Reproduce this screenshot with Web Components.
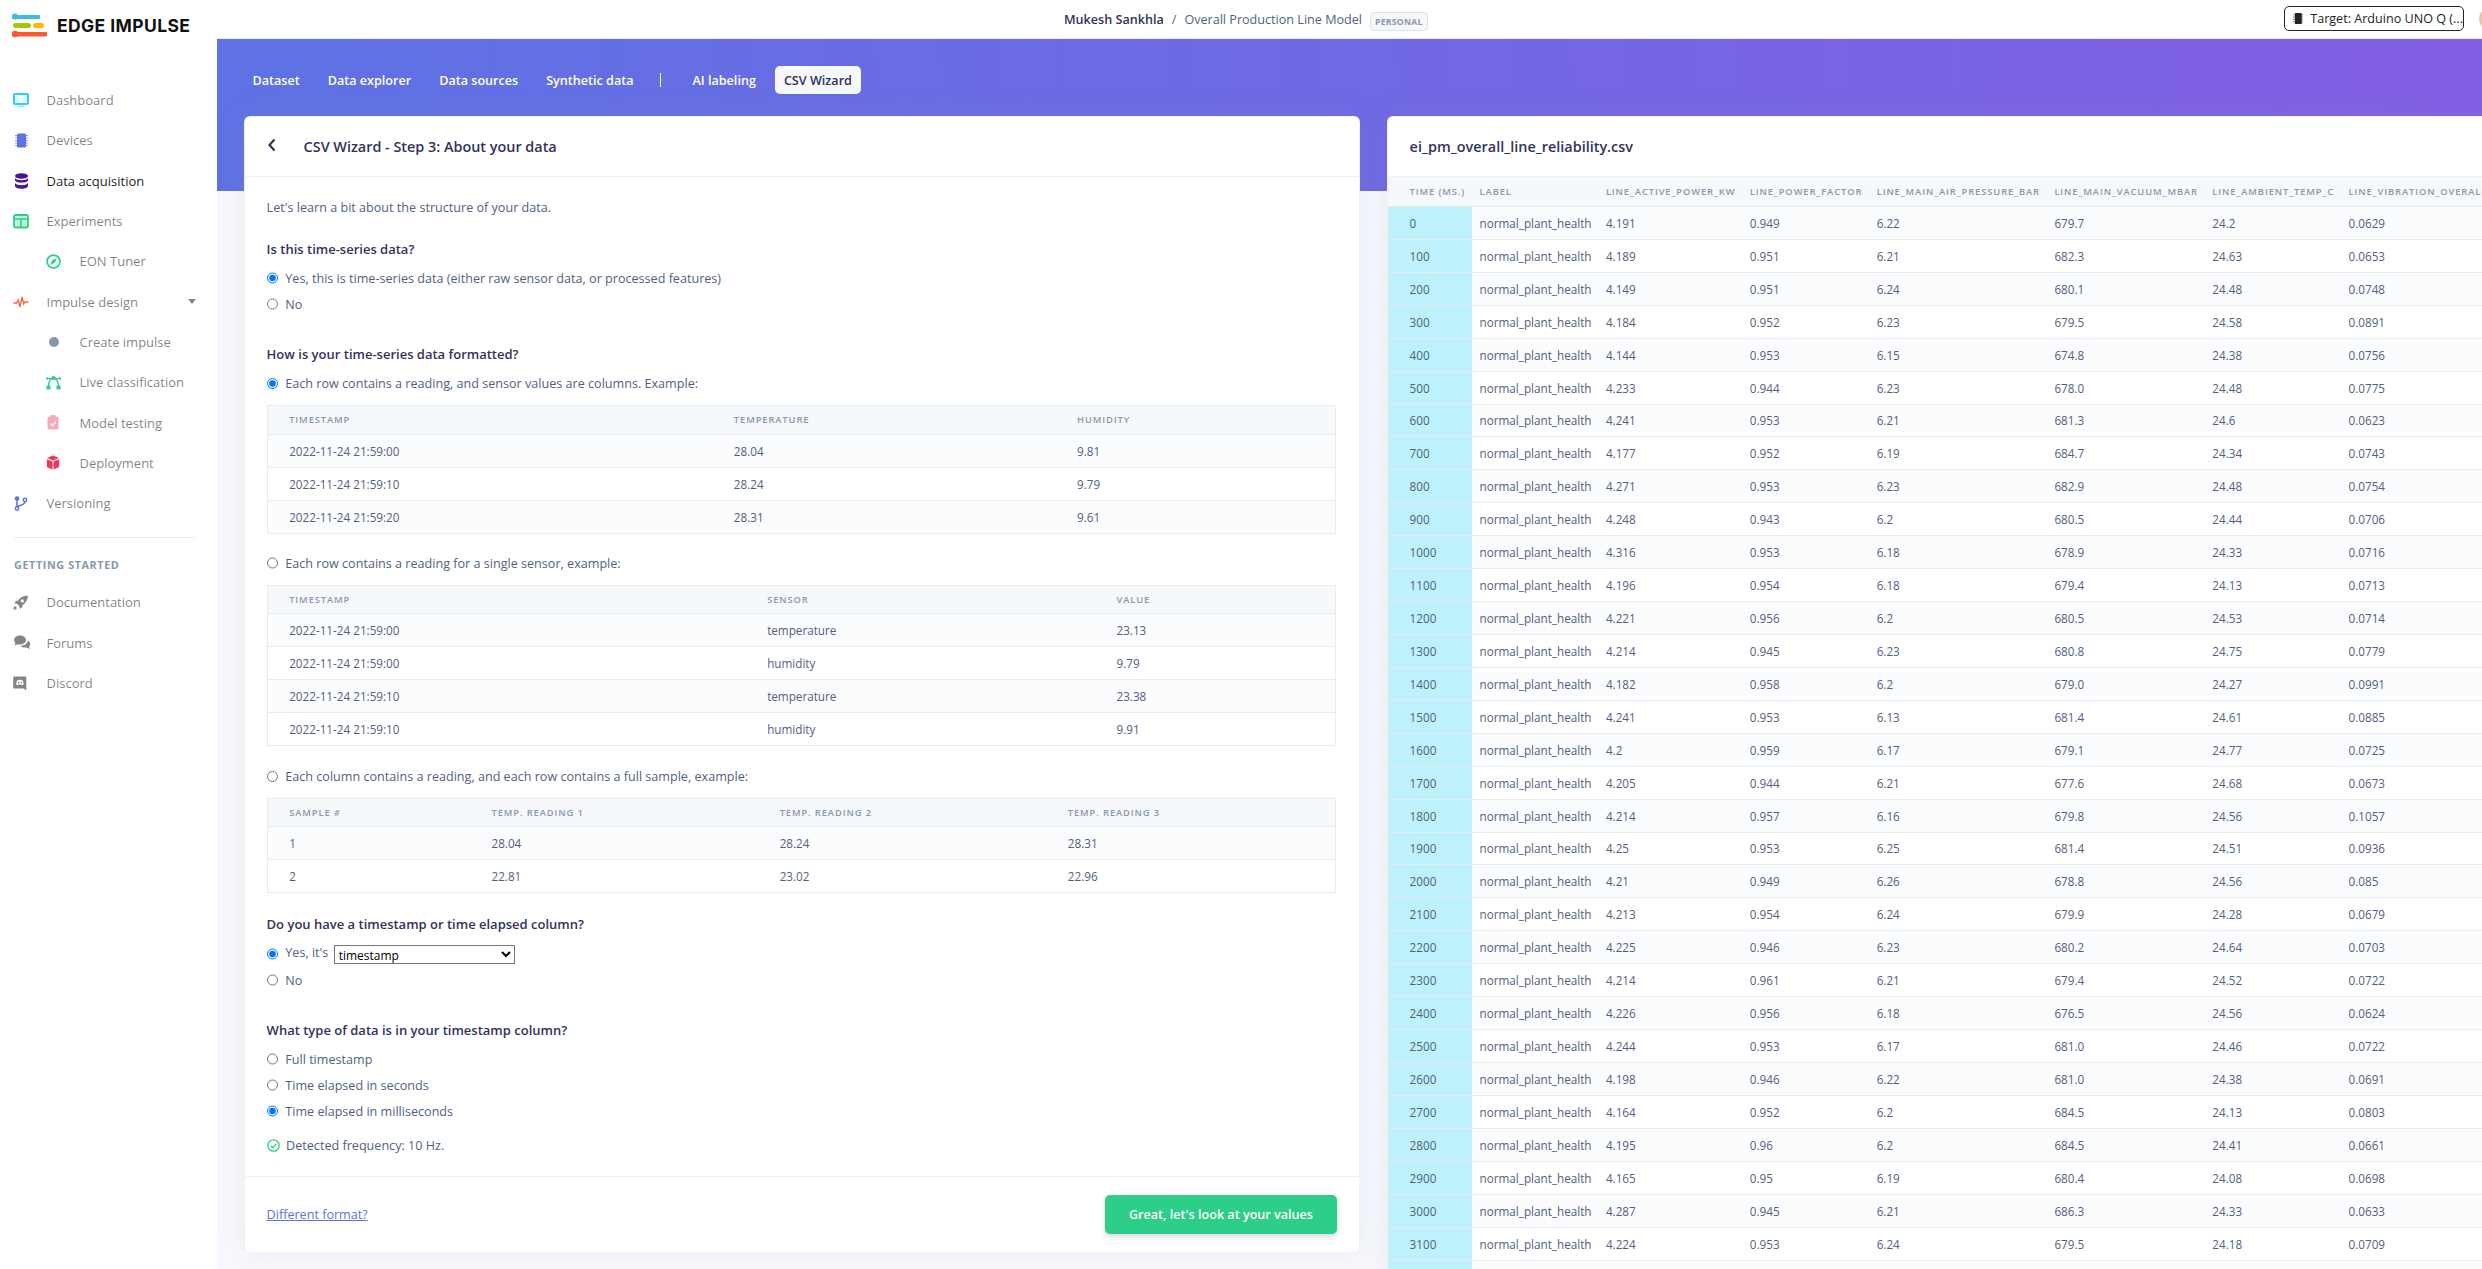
<!DOCTYPE html>
<html>
<head>
<meta charset="utf-8">
<title>CSV Wizard</title>
<style>
html, body { margin: 0; padding: 0; height: 100%; overflow: hidden; background: #f8f9fe; }
body { font-family: "Open Sans", sans-serif; font-size: 12.6px; color: #525f7f; }
</style>
</head>
<body>
<ei-app>
  <ei-sidebar slot="sidebar">
    <ei-nav-item>
      <svg slot="icon" width="16" height="15" viewBox="0 0 16 15"><rect x="1" y="1" width="14" height="10" rx="1" fill="#e8fbfe" stroke="#2fd0ef" stroke-width="2"/><rect x="4.5" y="12.5" width="7" height="1.6" fill="#8fe6f6"/></svg>
      Dashboard
    </ei-nav-item>
    <ei-nav-item>
      <svg slot="icon" width="16" height="15" viewBox="0 0 16 15"><rect x="4" y="0.5" width="9" height="14" rx="1.5" fill="#5e72e4"/><path d="M2 2.5h2M2 5h2M2 7.5h2M2 10h2M2 12.5h2M13 2.5h2M13 5h2M13 7.5h2M13 10h2M13 12.5h2" stroke="#8d9cec" stroke-width="1"/></svg>
      Devices
    </ei-nav-item>
    <ei-nav-item active>
      <svg slot="icon" width="16" height="16" viewBox="0 0 16 16"><g fill="#4b0f9e"><ellipse cx="8.5" cy="3" rx="6.5" ry="2.8"/><path d="M2 5c1 1.500 3.500 2.200 6.500 2.200S14 6.500 15 5v2.400c-1 1.500-3.500 2.200-6.500 2.200S3 8.900 2 7.400z"/><path d="M2 10c1 1.500 3.500 2.200 6.500 2.200S14 11.500 15 10v3c0 1.600-3 2.800-6.500 2.800S2 14.600 2 13z"/></g></svg>
      Data acquisition
    </ei-nav-item>
    <ei-nav-item>
      <svg slot="icon" width="16" height="15" viewBox="0 0 16 15"><rect x="1" y="1" width="14" height="12.500" rx="1.500" fill="#c3f1dc" stroke="#2dce89" stroke-width="1.800"/><path d="M1 5h14M8 5v8" stroke="#2dce89" stroke-width="1.600"/></svg>
      Experiments
    </ei-nav-item>
    <ei-nav-item sub>
      <svg slot="icon" width="15" height="15" viewBox="0 0 15 15"><circle cx="7.500" cy="7.500" r="6.400" fill="none" stroke="#2dce89" stroke-width="1.800"/><path d="M11 4L8.800 8.800 4 11l2.200-4.800z" fill="#2dce89"/></svg>
      EON Tuner
    </ei-nav-item>
    <ei-nav-item caret>
      <svg slot="icon" width="16" height="12" viewBox="0 0 16 12"><path d="M0.500 7h3.200l1.500-3 1.800 7 2-10 1.700 7 1.200-2h3.600" fill="none" stroke="#fb6340" stroke-width="1.300"/></svg>
      Impulse design
    </ei-nav-item>
    <ei-nav-item sub>
      <svg slot="icon" width="15" height="12" viewBox="0 0 15 12"><circle cx="8" cy="6" r="5" fill="#8798ad"/></svg>
      Create impulse
    </ei-nav-item>
    <ei-nav-item sub>
      <svg slot="icon" width="15" height="15" viewBox="0 0 15 15"><path d="M2.500 11.500C2.500 6 5 3 7.500 3s5 3 5 8.500" fill="none" stroke="#2dce89" stroke-width="1.300"/><path d="M1 3.500h13" stroke="#2dce89" stroke-width="1"/><g fill="#2dce89"><rect x="0.500" y="10.500" width="4" height="4" rx=".6"/><rect x="10.500" y="10.500" width="4" height="4" rx=".6"/><rect x="5.700" y="1.200" width="3.600" height="3.600" rx=".6"/><circle cx="1.200" cy="3.500" r="1.200"/><circle cx="13.800" cy="3.500" r="1.200"/></g></svg>
      Live classification
    </ei-nav-item>
    <ei-nav-item sub>
      <svg slot="icon" width="15" height="15" viewBox="0 0 15 15"><rect x="1.500" y="1.500" width="11" height="13" rx="1.500" fill="#f7a9b9"/><rect x="4.500" y="0" width="5" height="3" rx="1" fill="#f7a9b9"/><path d="M4.500 8.500l2 2 3.500-3.800" fill="none" stroke="#fff" stroke-width="1.300"/></svg>
      Model testing
    </ei-nav-item>
    <ei-nav-item sub>
      <svg slot="icon" width="15" height="15" viewBox="0 0 15 15"><path d="M7 0.500l6 2.500-6 2.400L1 3z" fill="#f5365c"/><path d="M0.800 4.300l5.700 2.300v7.900L1.900 12.600c-.7-.3-1.100-.8-1.100-1.500zM13.200 4.300L7.500 6.600v7.900l4.600-1.900c.7-.3 1.100-.8 1.100-1.500z" fill="#f5365c"/></svg>
      Deployment
    </ei-nav-item>
    <ei-nav-item>
      <svg slot="icon" width="15" height="15" viewBox="0 0 15 15"><g fill="none" stroke="#5e72e4" stroke-width="1.500"><circle cx="4" cy="2.500" r="1.600" fill="#5e72e4"/><circle cx="4" cy="12.500" r="1.700"/><circle cx="12" cy="4" r="1.700"/><path d="M4 4v7M12 5.800c0 3-4 3.200-8 5"/></g></svg>
      Versioning
    </ei-nav-item>
    <hr>
    <ei-nav-heading>Getting started</ei-nav-heading>
    <ei-nav-item>
      <svg slot="icon" width="16" height="15" viewBox="0 0 16 15"><path d="M15 0.500c-4.500.2-7.500 1.700-9.800 5L3 6l-1.600 2.500L4 8.800l2.400 2.400.3 2.600 2.500-1.600.5-2.200c3.300-2.300 5.200-5.300 5.300-10.500z" fill="#858585"/><circle cx="9.300" cy="5.900" r="1.600" fill="#fff"/><path d="M1 11.500l2.400 0 .2 2.400-3 .8z" fill="#858585"/></svg>
      Documentation
    </ei-nav-item>
    <ei-nav-item>
      <svg slot="icon" width="18" height="15" viewBox="0 0 18 15"><ellipse cx="7" cy="5" rx="6" ry="4.600" fill="#858585"/><path d="M2.500 7.500L1.500 10.500 5.500 9z" fill="#858585"/><path d="M14.500 5.500c1.700.8 2.700 2.100 2.700 3.500 0 1-.5 1.900-1.200 2.500l1 2.500-3.500-1.500c-2.300.4-4.700-.2-6-1.800 3.800.2 7.300-1.900 7-5.200z" fill="#858585"/></svg>
      Forums
    </ei-nav-item>
    <ei-nav-item>
      <svg slot="icon" width="15" height="15" viewBox="0 0 15 15"><path d="M1.500 0.500h10.500c.8 0 1.300.5 1.300 1.300v12.700l-2.500-2H1.500c-.8 0-1.300-.5-1.300-1.300V1.800C.2 1 .7.500 1.500.500z" fill="#858585"/><path d="M4 4.500c2-1 4-1 5.800 0l1 3.800c-.7.700-1.400.9-2 1L8.300 8.500H5.500L5 9.300c-.7-.1-1.300-.3-2-1z" fill="#fff"/><circle cx="5.600" cy="6.600" r=".8" fill="#858585"/><circle cx="8.200" cy="6.600" r=".8" fill="#858585"/></svg>
      Discord
    </ei-nav-item>
  </ei-sidebar>

  <ei-topbar slot="topbar"></ei-topbar>

  <ei-tabs slot="tabs">
    <ei-tab>Dataset</ei-tab>
    <ei-tab>Data explorer</ei-tab>
    <ei-tab>Data sources</ei-tab>
    <ei-tab sep>Synthetic data</ei-tab>
    <ei-tab>AI labeling</ei-tab>
    <ei-tab active>CSV Wizard</ei-tab>
  </ei-tabs>

  <ei-card slot="left" back title="CSV Wizard - Step 3: About your data">
    <ei-para>Let's learn a bit about the structure of your data.</ei-para>

    <ei-question style="margin-top:22.500px">Is this time-series data?</ei-question>
    <ei-radio checked style="margin-top:6px">Yes, this is time-series data (either raw sensor data, or processed features)</ei-radio>
    <ei-radio>No</ei-radio>

    <ei-question style="margin-top:27px">How is your time-series data formatted?</ei-question>
    <ei-radio checked style="margin-top:6.500px">Each row contains a reading, and sensor values are columns. Example:</ei-radio>
    <ei-example-table style="margin-top:8.500px" columns="Timestamp,Temperature,Humidity"
      rows="2022-11-24 21:59:00,28.04,9.81;2022-11-24 21:59:10,28.24,9.79;2022-11-24 21:59:20,28.31,9.61"></ei-example-table>
    <ei-radio style="margin-top:16.500px">Each row contains a reading for a single sensor, example:</ei-radio>
    <ei-example-table style="margin-top:8.500px" columns="Timestamp,Sensor,Value"
      rows="2022-11-24 21:59:00,temperature,23.13;2022-11-24 21:59:00,humidity,9.79;2022-11-24 21:59:10,temperature,23.38;2022-11-24 21:59:10,humidity,9.91"></ei-example-table>
    <ei-radio style="margin-top:17.500px">Each column contains a reading, and each row contains a full sample, example:</ei-radio>
    <ei-example-table style="margin-top:8px" columns="Sample #,Temp. reading 1,Temp. reading 2,Temp. reading 3"
      rows="1,28.04,28.24,28.31;2,22.81,23.02,22.96"></ei-example-table>

    <ei-question style="margin-top:21px">Do you have a timestamp or time elapsed column?</ei-question>
    <ei-radio checked style="margin-top:7px">Yes, it's <ei-select value="timestamp"></ei-select></ei-radio>
    <ei-radio>No</ei-radio>

    <ei-question style="margin-top:27px">What type of data is in your timestamp column?</ei-question>
    <ei-radio style="margin-top:6px">Full timestamp</ei-radio>
    <ei-radio>Time elapsed in seconds</ei-radio>
    <ei-radio checked>Time elapsed in milliseconds</ei-radio>
    <ei-detected style="margin-top:11px">Detected frequency: 10 Hz.</ei-detected>

    <ei-link slot="footer">Different format?</ei-link>
    <ei-button slot="footer">Great, let's look at your values</ei-button>
  </ei-card>

  <ei-card slot="right" title="ei_pm_overall_line_reliability.csv" flush>
    <ei-data-table></ei-data-table>
  </ei-card>
</ei-app>

<script>
const appTemplate = document.createElement('template')
appTemplate.innerHTML = `
<style>
:host { display: flex; width: 100vw; height: 100vh; overflow: hidden; background: #f8f9fe; }
.side { flex: none; width: 217px; background: #fff; }
.main { flex: none; width: 2265px; min-width: 0; }
.hero { height: 152px; box-sizing: border-box; padding: 27px 0 0 27px; background: linear-gradient(87deg, #5e72e4 0, #825ee4 100%); }
.cards { display: flex; gap: 27px; margin-top: -75px; padding-left: 27px; }
.left { flex: none; width: 1116px; }
.right { flex: none; width: 1300px; }
</style>
<div class="side"><slot name="sidebar"></slot></div>
<div class="main">
  <slot name="topbar"></slot>
  <div class="hero"><slot name="tabs"></slot></div>
  <div class="cards">
    <div class="left"><slot name="left"></slot></div>
    <div class="right"><slot name="right"></slot></div>
  </div>
</div>
`
customElements.define('ei-app', class extends HTMLElement {
  constructor () {
    super()
    this.attachShadow({ mode: 'open' }).appendChild(appTemplate.content.cloneNode(true))
  }
})

const sidebarTemplate = document.createElement('template')
sidebarTemplate.innerHTML = `
<style>
:host { display: block; width: 217px; }
.brand { display: flex; align-items: center; gap: 10px; height: 48px; padding: 0 0 0 12px; margin-top: 1px; margin-bottom: 31px; }
.name { font-family: Inter, "Open Sans", sans-serif; font-weight: 700; font-size: 17.500px; color: #111; letter-spacing: .4px; white-space: nowrap; }
::slotted(hr) { height: 1px; border: 0; background: #e9ecef; margin: 14px 22px 17px 14px; }
</style>
<div class="brand">
  <svg width="35" height="25" viewBox="0 0 35 25">
    <rect x="0" y="2" width="28" height="4" rx="1" fill="#3fbdd2"/><circle cx="3" cy="3.500" r="3" fill="#3fbdd2"/>
    <rect x="1" y="10" width="18" height="5" rx="2.500" fill="#a4c700"/>
    <rect x="21" y="10" width="11" height="5" rx="2.500" fill="#ffb900"/>
    <rect x="0" y="19" width="35" height="4.500" rx="1" fill="#fb5a2d"/><circle cx="3" cy="21" r="3.200" fill="#fb5a2d"/>
  </svg>
  <span class="name">EDGE IMPULSE</span>
</div>
<slot></slot>
`
customElements.define('ei-sidebar', class extends HTMLElement {
  constructor () {
    super()
    this.attachShadow({ mode: 'open' }).appendChild(sidebarTemplate.content.cloneNode(true))
  }
})

const navItemTemplate = document.createElement('template')
navItemTemplate.innerHTML = `
<style>
:host { display: flex; align-items: center; height: 40.300px; padding-left: 13px; color: rgba(0,0,0,.5); font-size: 13px; white-space: nowrap; position: relative; }
:host([sub]) { padding-left: 46px; }
:host([active]) { color: rgba(0,0,0,.9); }
.icon { flex: none; width: 33.500px; display: flex; align-items: center; }
.caret { display: none; position: absolute; left: 188px; top: 18px; width: 0; height: 0; border: 4px solid transparent; border-top: 5px solid #858585; border-bottom: 0; }
:host([caret]) .caret { display: block; }
</style>
<span class="icon"><slot name="icon"></slot></span>
<slot></slot>
<span class="caret"></span>
`
customElements.define('ei-nav-item', class extends HTMLElement {
  constructor () {
    super()
    this.attachShadow({ mode: 'open' }).appendChild(navItemTemplate.content.cloneNode(true))
  }
})

const navHeadingTemplate = document.createElement('template')
navHeadingTemplate.innerHTML = `
<style>
:host { display: block; padding-left: 14px; height: 27px; line-height: 19px; font-size: 10.800px; font-weight: 700; letter-spacing: .6px; color: #8898aa; text-transform: uppercase; }
</style>
<slot></slot>
`
customElements.define('ei-nav-heading', class extends HTMLElement {
  constructor () {
    super()
    this.attachShadow({ mode: 'open' }).appendChild(navHeadingTemplate.content.cloneNode(true))
  }
})

const topbarTemplate = document.createElement('template')
topbarTemplate.innerHTML = `
<style>
:host { display: flex; align-items: center; height: 38px; box-sizing: content-box; border-bottom: 1px solid #e9ecef; background: #fff; padding-left: 847px; overflow: hidden; font-size: 12.600px; white-space: nowrap; }
.crumb { display: flex; align-items: center; height: 26px; color: #525f7f; }
b { font-weight: 600; color: #32325d; }
i { font-style: normal; margin: 0 8px; }
.badge { margin-left: 8px; height: 19px; box-sizing: border-box; padding: 0 4px; line-height: 18px; margin-top: 4px; border: 1px solid #dee2e6; border-radius: 4px; background: #f6f9fc; color: #8898aa; font-size: 8.600px; font-weight: 700; letter-spacing: .3px; }
.target { margin-left: auto; display: flex; align-items: center; gap: 7px; width: 180px; height: 25px; box-sizing: border-box; padding-left: 8px; margin-top: -1px; border: 1px solid #212529; border-radius: 5px; color: #212529; font-size: 12.600px; }
.avatar { flex: none; width: 24px; height: 24px; border-radius: 50%; margin-left: 15px; margin-right: -21px; background: #e3c7a8; }
</style>
<span class="crumb"><b>Mukesh Sankhla</b><i>/</i><span>Overall Production Line Model</span><span class="badge">PERSONAL</span></span>
<span class="target">
  <svg width="11" height="13" viewBox="0 0 11 13"><rect x="2" y="0.500" width="7.500" height="12" rx="1" fill="#212529"/><path d="M0 2.500h2M0 5h2M0 7.500h2M0 10h2M9.500 2.500h1.500M9.500 5h1.500M9.500 7.500h1.500M9.500 10h1.500" stroke="#777" stroke-width="1"/></svg>
  Target: Arduino UNO Q (...
</span>
<span class="avatar"></span>
`
customElements.define('ei-topbar', class extends HTMLElement {
  constructor () {
    super()
    this.attachShadow({ mode: 'open' }).appendChild(topbarTemplate.content.cloneNode(true))
  }
})

const tabsTemplate = document.createElement('template')
tabsTemplate.innerHTML = `
<style>
:host { display: flex; align-items: center; height: 28px; gap: 10px; margin-left: -0.500px; }
</style>
<slot></slot>
`
customElements.define('ei-tabs', class extends HTMLElement {
  constructor () {
    super()
    this.attachShadow({ mode: 'open' }).appendChild(tabsTemplate.content.cloneNode(true))
  }
})

const tabTemplate = document.createElement('template')
tabTemplate.innerHTML = `
<style>
:host { display: flex; align-items: center; height: 28px; padding: 0 9px; border-radius: 5px; color: #fff; font-size: 12.600px; font-weight: 600; white-space: nowrap; }
:host([active]) { background: #f6f9fc; color: #32325d; }
:host([sep]) { margin-right: 0; }
.sep { display: none; width: 1px; height: 14px; background: #fff; margin-left: 26px; margin-right: 13px; }
:host([sep]) .sep { display: block; }
:host([sep]) { padding-right: 0; }
</style>
<slot></slot><span class="sep"></span>
`
customElements.define('ei-tab', class extends HTMLElement {
  constructor () {
    super()
    this.attachShadow({ mode: 'open' }).appendChild(tabTemplate.content.cloneNode(true))
  }
})

const cardTemplate = document.createElement('template')
cardTemplate.innerHTML = `
<style>
:host { display: block; background: #fff; border-radius: 6px; box-shadow: 0 0 28px 0 rgba(136,152,170,.15); border: 1px solid rgba(0,0,0,.05); box-sizing: border-box; }
.head { display: flex; align-items: center; height: 59px; padding-left: 21.600px; border-bottom: 1.500px solid #eef0f3; color: #32325d; font-size: 14.400px; font-weight: 600; white-space: nowrap; }
.back { display: none; width: 37px; flex: none; }
:host([back]) .back { display: block; }
.body { padding: 20.500px 23px 21px 21.600px; }
:host([flush]) .body { padding: 0; }
.foot { display: flex; align-items: center; justify-content: space-between; height: 75px; padding: 0 22px 0 21.600px; border-top: 1px solid #eef0f3; }
:host([flush]) .foot { display: none; }
</style>
<div class="head">
  <span class="back"><svg width="10" height="14" viewBox="0 0 10 14"><path d="M7.500 1.500L2.500 7l5 5.500" fill="none" stroke="#32325d" stroke-width="2.200"/></svg></span>
  <span class="title"></span>
</div>
<div class="body"><slot></slot></div>
<div class="foot"><slot name="footer"></slot></div>
`
customElements.define('ei-card', class extends HTMLElement {
  constructor () {
    super()
    this.attachShadow({ mode: 'open' }).appendChild(cardTemplate.content.cloneNode(true))
  }

  connectedCallback () {
    this.shadowRoot.querySelector('.title').textContent = this.getAttribute('title')
    this.removeAttribute('title')
  }
})

const paraTemplate = document.createElement('template')
paraTemplate.innerHTML = `
<style>
:host { display: block; line-height: 19px; font-size: 12.600px; color: #525f7f; }
</style>
<slot></slot>
`
customElements.define('ei-para', class extends HTMLElement {
  constructor () {
    super()
    this.attachShadow({ mode: 'open' }).appendChild(paraTemplate.content.cloneNode(true))
  }
})

const questionTemplate = document.createElement('template')
questionTemplate.innerHTML = `
<style>
:host { display: block; line-height: 20px; font-size: 13px; font-weight: 600; color: #32325d; }
</style>
<slot></slot>
`
customElements.define('ei-question', class extends HTMLElement {
  constructor () {
    super()
    this.attachShadow({ mode: 'open' }).appendChild(questionTemplate.content.cloneNode(true))
  }
})

const radioTemplate = document.createElement('template')
radioTemplate.innerHTML = `
<style>
:host { display: flex; align-items: center; height: 26px; font-size: 12.600px; color: #525f7f; white-space: nowrap; }
input { flex: none; width: 11.700px; height: 11.700px; margin: 0 7px 0 0; }
</style>
<input type="radio"><span><slot></slot></span>
`
customElements.define('ei-radio', class extends HTMLElement {
  constructor () {
    super()
    this.attachShadow({ mode: 'open' }).appendChild(radioTemplate.content.cloneNode(true))
    this.shadowRoot.querySelector('input').checked = this.hasAttribute('checked')
  }
})

const selectTemplate = document.createElement('template')
selectTemplate.innerHTML = `
<style>
:host { display: inline-block; margin-left: 2px; vertical-align: middle; }
select { display: block; width: 181px; height: 19px; padding: 0; font-family: "Open Sans", sans-serif; font-size: 12px; color: #000; background: #fff; }
</style>
<select></select>
`
customElements.define('ei-select', class extends HTMLElement {
  constructor () {
    super()
    this.attachShadow({ mode: 'open' }).appendChild(selectTemplate.content.cloneNode(true))
    const option = document.createElement('option')
    option.textContent = this.getAttribute('value')
    this.shadowRoot.querySelector('select').appendChild(option)
  }
})

// rows come in as "a,b,c;d,e,f"
const exampleTemplate = document.createElement('template')
exampleTemplate.innerHTML = `
<style>
:host { display: block; }
table { width: 100%; border-collapse: collapse; border: 1px solid #e9ecef; white-space: nowrap; }
th { height: 28.500px; box-sizing: border-box; padding: 0 21.600px; text-align: left; font-size: 9.360px; font-weight: 600; letter-spacing: .9px; text-transform: uppercase; color: #8898aa; background: #f6f9fc; border-bottom: 1px solid #e9ecef; }
td { height: 33px; box-sizing: border-box; padding: 0 21.600px; font-size: 11.700px; color: #525f7f; border-top: 1px solid #e9ecef; }
tr:nth-child(odd) td { background: #fbfcfe; }
</style>
<table><thead><tr></tr></thead><tbody></tbody></table>
`
customElements.define('ei-example-table', class extends HTMLElement {
  constructor () {
    super()
    this.attachShadow({ mode: 'open' }).appendChild(exampleTemplate.content.cloneNode(true))
  }

  connectedCallback () {
    const head = this.shadowRoot.querySelector('thead tr')
    const body = this.shadowRoot.querySelector('tbody')
    this.getAttribute('columns').split(',').forEach(name => {
      const th = document.createElement('th')
      th.textContent = name
      head.appendChild(th)
    })
    this.getAttribute('rows').split(';').forEach(row => {
      const tr = document.createElement('tr')
      row.split(',').forEach(value => {
        const td = document.createElement('td')
        td.textContent = value
        tr.appendChild(td)
      })
      body.appendChild(tr)
    })
  }
})

const detectedTemplate = document.createElement('template')
detectedTemplate.innerHTML = `
<style>
:host { display: flex; align-items: center; gap: 6.500px; height: 20px; font-size: 12.600px; color: #525f7f; }
</style>
<svg width="13" height="13" viewBox="0 0 13 13"><circle cx="6.500" cy="6.500" r="5.700" fill="none" stroke="#2dce89" stroke-width="1.300"/><path d="M3.800 6.700l2 2 3.600-3.800" fill="none" stroke="#2dce89" stroke-width="1.300"/></svg>
<slot></slot>
`
customElements.define('ei-detected', class extends HTMLElement {
  constructor () {
    super()
    this.attachShadow({ mode: 'open' }).appendChild(detectedTemplate.content.cloneNode(true))
  }
})

const linkTemplate = document.createElement('template')
linkTemplate.innerHTML = `
<style>
:host { display: inline-block; font-size: 12.600px; color: #5e72e4; text-decoration: underline; margin-top: 0; }
</style>
<slot></slot>
`
customElements.define('ei-link', class extends HTMLElement {
  constructor () {
    super()
    this.attachShadow({ mode: 'open' }).appendChild(linkTemplate.content.cloneNode(true))
  }
})

const buttonTemplate = document.createElement('template')
buttonTemplate.innerHTML = `
<style>
:host { display: flex; align-items: center; justify-content: center; width: 232px; height: 39px; border-radius: 5px; background: #2dce89; color: #fff; font-size: 12.600px; font-weight: 600; box-shadow: 0 4px 6px rgba(50,50,93,.11), 0 1px 3px rgba(0,0,0,.08); white-space: nowrap; }
</style>
<slot></slot>
`
customElements.define('ei-button', class extends HTMLElement {
  constructor () {
    super()
    this.attachShadow({ mode: 'open' }).appendChild(buttonTemplate.content.cloneNode(true))
  }
})

const csvRows = `0 4.191 0.949 6.22 679.7 24.2 0.0629
100 4.189 0.951 6.21 682.3 24.63 0.0653
200 4.149 0.951 6.24 680.1 24.48 0.0748
300 4.184 0.952 6.23 679.5 24.58 0.0891
400 4.144 0.953 6.15 674.8 24.38 0.0756
500 4.233 0.944 6.23 678.0 24.48 0.0775
600 4.241 0.953 6.21 681.3 24.6 0.0623
700 4.177 0.952 6.19 684.7 24.34 0.0743
800 4.271 0.953 6.23 682.9 24.48 0.0754
900 4.248 0.943 6.2 680.5 24.44 0.0706
1000 4.316 0.953 6.18 678.9 24.33 0.0716
1100 4.196 0.954 6.18 679.4 24.13 0.0713
1200 4.221 0.956 6.2 680.5 24.53 0.0714
1300 4.214 0.945 6.23 680.8 24.75 0.0779
1400 4.182 0.958 6.2 679.0 24.27 0.0991
1500 4.241 0.953 6.13 681.4 24.61 0.0885
1600 4.2 0.959 6.17 679.1 24.77 0.0725
1700 4.205 0.944 6.21 677.6 24.68 0.0673
1800 4.214 0.957 6.16 679.8 24.56 0.1057
1900 4.25 0.953 6.25 681.4 24.51 0.0936
2000 4.21 0.949 6.26 678.8 24.56 0.085
2100 4.213 0.954 6.24 679.9 24.28 0.0679
2200 4.225 0.946 6.23 680.2 24.64 0.0703
2300 4.214 0.961 6.21 679.4 24.52 0.0722
2400 4.226 0.956 6.18 676.5 24.56 0.0624
2500 4.244 0.953 6.17 681.0 24.46 0.0722
2600 4.198 0.946 6.22 681.0 24.38 0.0691
2700 4.164 0.952 6.2 684.5 24.13 0.0803
2800 4.195 0.96 6.2 684.5 24.41 0.0661
2900 4.165 0.95 6.19 680.4 24.08 0.0698
3000 4.287 0.945 6.21 686.3 24.33 0.0633
3100 4.224 0.953 6.24 679.5 24.18 0.0709`

const dataTemplate = document.createElement('template')
dataTemplate.innerHTML = `
<style>
:host { display: block; overflow: hidden; }
table { border-collapse: collapse; white-space: nowrap; }
th { height: 29.500px; box-sizing: border-box; padding: 0 7.200px; text-align: left; font-size: 9.360px; font-weight: 600; letter-spacing: .9px; text-transform: uppercase; color: #8898aa; background: #f6f9fc; border-bottom: 1px solid #e9ecef; }
td { height: 32.930px; box-sizing: border-box; padding: 0 7.200px; font-size: 11.700px; color: #525f7f; border-top: 1px solid #e9ecef; }
th:first-child, td:first-child { padding-left: 21.600px; }
td:first-child { background: #bdf1fb; }
tr:nth-child(odd) td:not(:first-child) { background: #fbfcfe; }
</style>
<table><thead><tr></tr></thead><tbody></tbody></table>
`
customElements.define('ei-data-table', class extends HTMLElement {
  constructor () {
    super()
    this.attachShadow({ mode: 'open' }).appendChild(dataTemplate.content.cloneNode(true))
  }

  connectedCallback () {
    const head = this.shadowRoot.querySelector('thead tr')
    const body = this.shadowRoot.querySelector('tbody')
    const columns = ['Time (ms.)', 'Label', 'line_active_power_kw', 'line_power_factor', 'line_main_air_pressure_bar',
      'line_main_vacuum_mbar', 'line_ambient_temp_c', 'line_vibration_overall']
    columns.forEach(name => {
      const th = document.createElement('th')
      th.textContent = name
      head.appendChild(th)
    })
    csvRows.split('\n').forEach(line => {
      const values = line.split(' ')
      values.splice(1, 0, 'normal_plant_health')
      const tr = document.createElement('tr')
      values.forEach(value => {
        const td = document.createElement('td')
        td.textContent = value
        tr.appendChild(td)
      })
      body.appendChild(tr)
    })
    // next row is cut off by the bottom of the window
    const last = document.createElement('tr')
    columns.forEach(() => last.appendChild(document.createElement('td')))
    body.appendChild(last)
  }
})
</script>
</body>
</html>
